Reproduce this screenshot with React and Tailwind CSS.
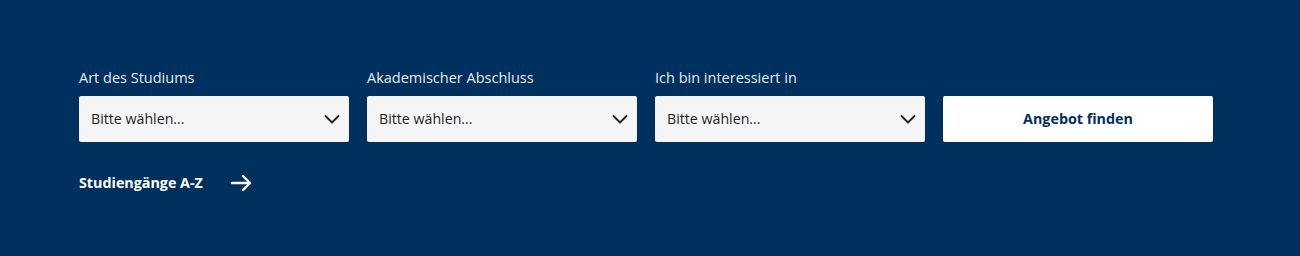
export default function App() {
  const fields = [
    "Art des Studiums",
    "Akademischer Abschluss",
    "Ich bin interessiert in",
  ];
  return (
    <div
      className="w-[1300px] h-[256px] bg-[#00305e] pl-[79px] pt-[68px]"
      style={{ fontFamily: '"Open Sans", "Noto Sans", sans-serif' }}
    >
      <div className="flex gap-[18px] items-end">
        {fields.map((f) => (
          <div key={f} className="flex flex-col w-[270px]">
            <label className="text-[14.5px] leading-[20px] text-[#e6eaf0] mb-[8px]">{f}</label>
            <div className="h-[46px] bg-[#f5f5f5] rounded-[2px] flex items-center justify-between pl-[12px] pr-[8px]">
              <span className="text-[14.2px] text-[#1e1e1e]">Bitte wählen...</span>
              <svg width="18" height="18" viewBox="0 0 18 18" fill="none">
                <path d="M2.5 6 L9 12.5 L15.5 6" stroke="#1e1e1e" strokeWidth="1.8" strokeLinecap="round" strokeLinejoin="round" />
              </svg>
            </div>
          </div>
        ))}
        <button className="w-[270px] h-[46px] bg-white rounded-[2px] text-[14.3px] font-bold text-[#00305e]">
          Angebot finden
        </button>
      </div>
      <a href="#" className="mt-[31px] flex items-center gap-[27px] text-white text-[14.3px] font-bold leading-[20px] w-fit">
        Studiengänge A-Z
        <svg width="22" height="20" viewBox="0 0 22 20" fill="none">
          <path d="M2 10 H20 M13 3 L20 10 L13 17" stroke="white" strokeWidth="2.4" strokeLinecap="round" strokeLinejoin="round" />
        </svg>
      </a>
    </div>
  );
}
